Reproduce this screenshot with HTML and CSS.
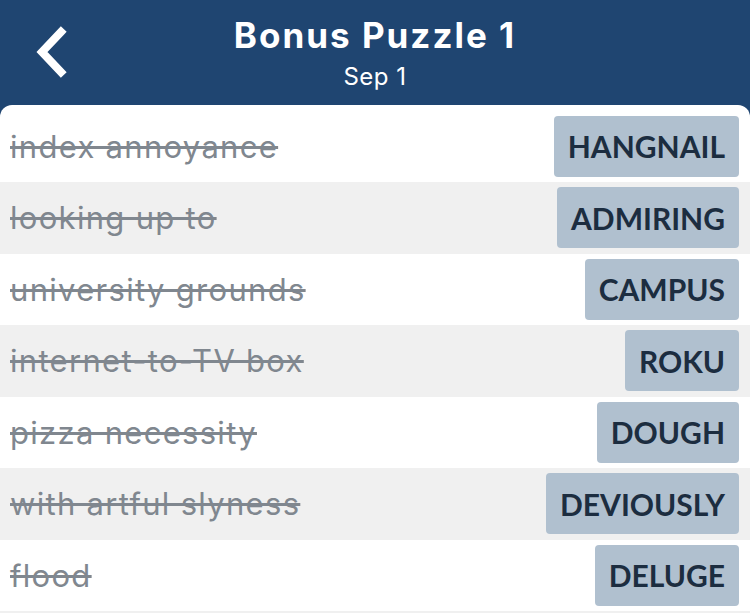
FILE: index.html
```html
<!DOCTYPE html>
<html lang="en">
<head>
    <meta charset="UTF-8">
    <meta name="viewport" content="width=device-width, initial-scale=1.0">
    <title>Bonus Puzzle 1</title>
    <link rel="stylesheet" href="styles.css">
</head>
<body>

    <!-- Header -->
    <div class="header">
        <a class="back" href="#">
            <svg width="40" height="56" viewBox="0 0 40 56">
                <polyline points="30,8 11,28 30,48" fill="none" stroke="#fff" stroke-width="8" stroke-linecap="square"/>
            </svg>
        </a>
        <div class="title">Bonus Puzzle 1</div>
        <div class="subtitle">Sep 1</div>
    </div>

    <!-- Clue list -->
    <div class="card">
        <div class="row">
            <span class="clue">index annoyance</span>
            <span class="answer">HANGNAIL</span>
        </div>
        <div class="row">
            <span class="clue">looking up to</span>
            <span class="answer">ADMIRING</span>
        </div>
        <div class="row">
            <span class="clue">university grounds</span>
            <span class="answer">CAMPUS</span>
        </div>
        <div class="row">
            <span class="clue">internet-to-TV box</span>
            <span class="answer">ROKU</span>
        </div>
        <div class="row">
            <span class="clue">pizza necessity</span>
            <span class="answer">DOUGH</span>
        </div>
        <div class="row">
            <span class="clue">with artful slyness</span>
            <span class="answer">DEVIOUSLY</span>
        </div>
        <div class="row">
            <span class="clue">flood</span>
            <span class="answer">DELUGE</span>
        </div>
        <div class="row"></div>
    </div>

</body>
</html>
```

FILE: styles.css
```css
body {
    margin: 0;
    background-color: #1f4571;
    font-family: Inter, "Open Sans", sans-serif;
    overflow: hidden;
}
.header {
    position: relative;
    height: 105px;
    color: #fff;
    text-align: center;
}
.back {
    position: absolute;
    left: 31px;
    top: 24px;
}
.title {
    padding-top: 12px;
    font-size: 35px;
    font-weight: bold;
    line-height: 46px;
    letter-spacing: 2px;
}
.subtitle {
    margin-top: 2px;
    font-size: 24px;
    line-height: 34px;
    letter-spacing: 0.5px;
}
.card {
    background: #fff;
    border-radius: 12px 12px 0 0;
    padding-top: 5.5px;
}
.row {
    display: flex;
    justify-content: space-between;
    align-items: center;
    height: 71.5px;
    padding: 0 11px 0 10px;
}
.row:nth-child(even) { background: #f0f0f0; }
.clue {
    font-size: 31px;
    color: #80878f;
    text-decoration: line-through;
    letter-spacing: 1.3px;
}
.answer {
    display: flex;
    align-items: center;
    height: 61px;
    padding: 0 14px;
    background: #b0c0cf;
    border-radius: 4px;
    color: #1c2d40;
    font-family: Lato, sans-serif;
    font-size: 30px;
    font-weight: bold;
}
```
